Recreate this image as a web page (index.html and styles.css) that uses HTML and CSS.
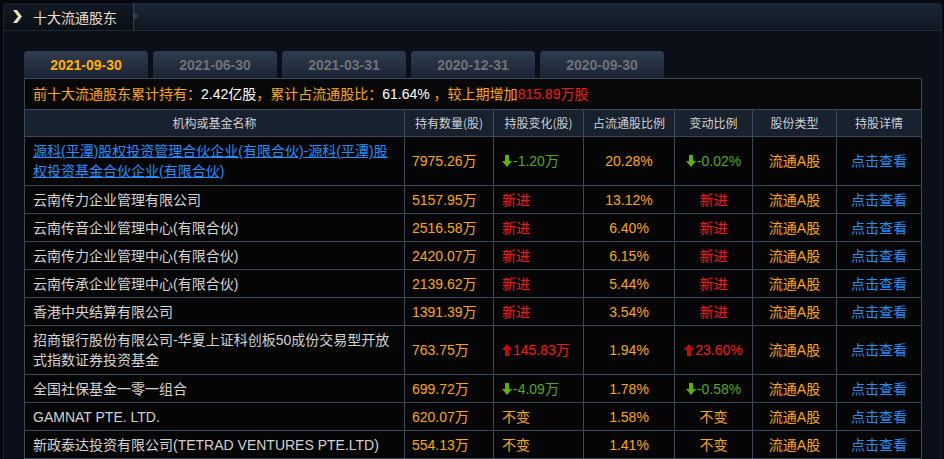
FILE: index.html
```html
<!DOCTYPE html>
<html lang="zh-CN">
<head>
<meta charset="utf-8">
<title>十大流通股东</title>
<link rel="stylesheet" href="styles.css">
</head>
<body>
<div class="panel">
  <div class="panel-head">
    <div class="title">
      <svg class="chev" width="11" height="13" viewBox="0 0 11 13"><path d="M1 0h4l5 6.5-5 6.5h-4l5-6.5z" fill="#e9dcc0"/></svg>
      <span class="title-text">十大流通股东</span>
    </div>
  </div>
  <div class="panel-body">
    <div class="tabs">
      <div class="tab active">2021-09-30</div>
      <div class="tab">2021-06-30</div>
      <div class="tab">2021-03-31</div>
      <div class="tab">2020-12-31</div>
      <div class="tab">2020-09-30</div>
    </div>
    <div class="summary"><span class="o">前十大流通股东累计持有：</span><span class="w">2.42亿股</span><span class="o">，累计占流通股比：</span><span class="w">61.64%</span><span class="o"> ，较上期增加</span><span class="r">815.89万股</span></div>
    <table class="holders">
      <colgroup>
        <col class="c-name"><col class="c-hold"><col class="c-chg"><col class="c-ratio"><col class="c-cr"><col class="c-type"><col class="c-det">
      </colgroup>
      <thead>
        <tr><th>机构或基金名称</th><th>持有数量(股)</th><th>持股变化(股)</th><th>占流通股比例</th><th>变动比例</th><th>股份类型</th><th>持股详情</th></tr>
      </thead>
      <tbody>
        <tr class="tall">
          <td class="name"><a class="link" href="#">源科(平潭)股权投资管理合伙企业(有限合伙)-源科(平潭)股<br>权投资基金合伙企业(有限合伙)</a></td>
          <td class="num">7975.26万</td>
          <td class="chg g"><svg class="arr" width="10" height="12" viewBox="0 0 10 12"><path d="M3 0h4v6h3l-5 6-5-6h3z" fill="#5cb400"/></svg>-1.20万</td>
          <td class="ctr o">20.28%</td>
          <td class="ctr g"><svg class="arr" width="10" height="12" viewBox="0 0 10 12"><path d="M3 0h4v6h3l-5 6-5-6h3z" fill="#5cb400"/></svg>-0.02%</td>
          <td class="ctr o">流通A股</td>
          <td class="ctr b">点击查看</td>
        </tr>
        <tr>
          <td class="name">云南传力企业管理有限公司</td>
          <td class="num">5157.95万</td>
          <td class="chg r">新进</td>
          <td class="ctr o">13.12%</td>
          <td class="ctr r">新进</td>
          <td class="ctr o">流通A股</td>
          <td class="ctr b">点击查看</td>
        </tr>
        <tr>
          <td class="name">云南传音企业管理中心(有限合伙)</td>
          <td class="num">2516.58万</td>
          <td class="chg r">新进</td>
          <td class="ctr o">6.40%</td>
          <td class="ctr r">新进</td>
          <td class="ctr o">流通A股</td>
          <td class="ctr b">点击查看</td>
        </tr>
        <tr>
          <td class="name">云南传力企业管理中心(有限合伙)</td>
          <td class="num">2420.07万</td>
          <td class="chg r">新进</td>
          <td class="ctr o">6.15%</td>
          <td class="ctr r">新进</td>
          <td class="ctr o">流通A股</td>
          <td class="ctr b">点击查看</td>
        </tr>
        <tr>
          <td class="name">云南传承企业管理中心(有限合伙)</td>
          <td class="num">2139.62万</td>
          <td class="chg r">新进</td>
          <td class="ctr o">5.44%</td>
          <td class="ctr r">新进</td>
          <td class="ctr o">流通A股</td>
          <td class="ctr b">点击查看</td>
        </tr>
        <tr>
          <td class="name">香港中央结算有限公司</td>
          <td class="num">1391.39万</td>
          <td class="chg r">新进</td>
          <td class="ctr o">3.54%</td>
          <td class="ctr r">新进</td>
          <td class="ctr o">流通A股</td>
          <td class="ctr b">点击查看</td>
        </tr>
        <tr class="tall">
          <td class="name">招商银行股份有限公司-华夏上证科创板50成份交易型开放<br>式指数证券投资基金</td>
          <td class="num">763.75万</td>
          <td class="chg r"><svg class="arr" width="10" height="12" viewBox="0 0 10 12"><path d="M5 0l5 6h-3v6h-4v-6h-3z" fill="#c40a0a"/></svg>145.83万</td>
          <td class="ctr o">1.94%</td>
          <td class="ctr r"><svg class="arr" width="10" height="12" viewBox="0 0 10 12"><path d="M5 0l5 6h-3v6h-4v-6h-3z" fill="#c40a0a"/></svg>23.60%</td>
          <td class="ctr o">流通A股</td>
          <td class="ctr b">点击查看</td>
        </tr>
        <tr>
          <td class="name">全国社保基金一零一组合</td>
          <td class="num">699.72万</td>
          <td class="chg g"><svg class="arr" width="10" height="12" viewBox="0 0 10 12"><path d="M3 0h4v6h3l-5 6-5-6h3z" fill="#5cb400"/></svg>-4.09万</td>
          <td class="ctr o">1.78%</td>
          <td class="ctr g"><svg class="arr" width="10" height="12" viewBox="0 0 10 12"><path d="M3 0h4v6h3l-5 6-5-6h3z" fill="#5cb400"/></svg>-0.58%</td>
          <td class="ctr o">流通A股</td>
          <td class="ctr b">点击查看</td>
        </tr>
        <tr>
          <td class="name">GAMNAT PTE. LTD.</td>
          <td class="num">620.07万</td>
          <td class="chg o">不变</td>
          <td class="ctr o">1.58%</td>
          <td class="ctr o">不变</td>
          <td class="ctr o">流通A股</td>
          <td class="ctr b">点击查看</td>
        </tr>
        <tr>
          <td class="name">新政泰达投资有限公司(TETRAD VENTURES PTE.LTD)</td>
          <td class="num">554.13万</td>
          <td class="chg o">不变</td>
          <td class="ctr o">1.41%</td>
          <td class="ctr o">不变</td>
          <td class="ctr o">流通A股</td>
          <td class="ctr b">点击查看</td>
        </tr>
      </tbody>
    </table>
  </div>
</div>
</body>
</html>
```

FILE: styles.css
```css
* { box-sizing: border-box; }
html, body { margin: 0; padding: 0; }
body {
  background: #07090c;
  font-family: "Liberation Sans", "Noto Sans CJK SC", sans-serif;
  font-size: 14px;
  width: 944px;
  height: 459px;
  overflow: hidden;
}
.panel {
  margin: 3px 2px 0 3px;
  height: 456px;
  background: #0b1018;
  border-left: 1px solid #1b2330;
  border-right: 1px solid #1b2330;
  border-radius: 4px 4px 0 0;
}
.panel-head {
  height: 28px;
  display: flex;
  background: linear-gradient(#1c2839, #101721);
  border-bottom: 1px solid #1f2935;
  border-radius: 4px 4px 0 0;
}
.title {
  position: relative;
  width: 130px;
  display: flex;
  align-items: center;
  background: linear-gradient(#121a25, #0a0f16);
  border-right: 1px solid #36414f;
  border-radius: 4px 0 0 0;
}
.title::after {
  content: "";
  position: absolute;
  right: -5px;
  top: 9px;
  border-left: 4px solid #36414f;
  border-top: 4px solid transparent;
  border-bottom: 4px solid transparent;
}
.chev { margin-left: 8px; }
.title-text {
  margin-left: 10px;
  color: #e8dec8;
  font-size: 14px;
  font-family: "Noto Sans CJK SC", sans-serif;
}
.panel-body { padding: 20px 20px 0 20px; }
.tabs { display: flex; gap: 5px; height: 27px; }
.tab {
  width: 124px;
  height: 27px;
  line-height: 28px;
  text-align: center;
  font-weight: bold;
  font-size: 14px;
  color: #6e7279;
  background: linear-gradient(#303c4f, #1b2434);
  border-radius: 4px 4px 0 0;
}
.tab.active { color: #ffae00; }
.summary {
  width: 898px;
  height: 31px;
  border: 1px solid #3b4859;
  border-bottom: none;
  background: #080808;
  padding-left: 8px;
  line-height: 30px;
  font-size: 14px;
  white-space: nowrap;
}
.o { color: #ffa800; }
.w { color: #ffffff; }
.r { color: #ff1414; }
.g { color: #56a81c; }
.b { color: #1e90ff; }
.holders {
  width: 898px;
  table-layout: fixed;
  border-collapse: separate;
  border-spacing: 0;
  border-left: 1px solid #3b4859;
  border-top: 1px solid #3b4859;
}
.c-name { width: 380px; }
.c-hold { width: 89px; }
.c-chg { width: 90px; }
.c-ratio { width: 91px; }
.c-cr { width: 78px; }
.c-type { width: 84px; }
.c-det { width: 85px; }
.holders th, .holders td {
  border-right: 1px solid #3b4859;
  border-bottom: 1px solid #3b4859;
  line-height: 20px;
  white-space: nowrap;
  vertical-align: middle;
}
.holders th {
  background: #18212e;
  color: #cdd0d4;
  font-size: 12px;
  font-weight: normal;
  padding: 3px 2px;
  font-family: "Noto Sans CJK SC", sans-serif;
}
.holders td {
  background: #050505;
  padding: 4px 8px 3px;
  font-size: 14px;
}
.holders tr.tall td { padding-bottom: 4px; }
.name { color: #d2d2d2; }
.link { color: #1e90ff; text-decoration: underline; }
.num { color: #ffa800; padding-left: 7px !important; }
.ctr { text-align: center; }
.arr { vertical-align: -1px; margin-right: 1px; }
```
